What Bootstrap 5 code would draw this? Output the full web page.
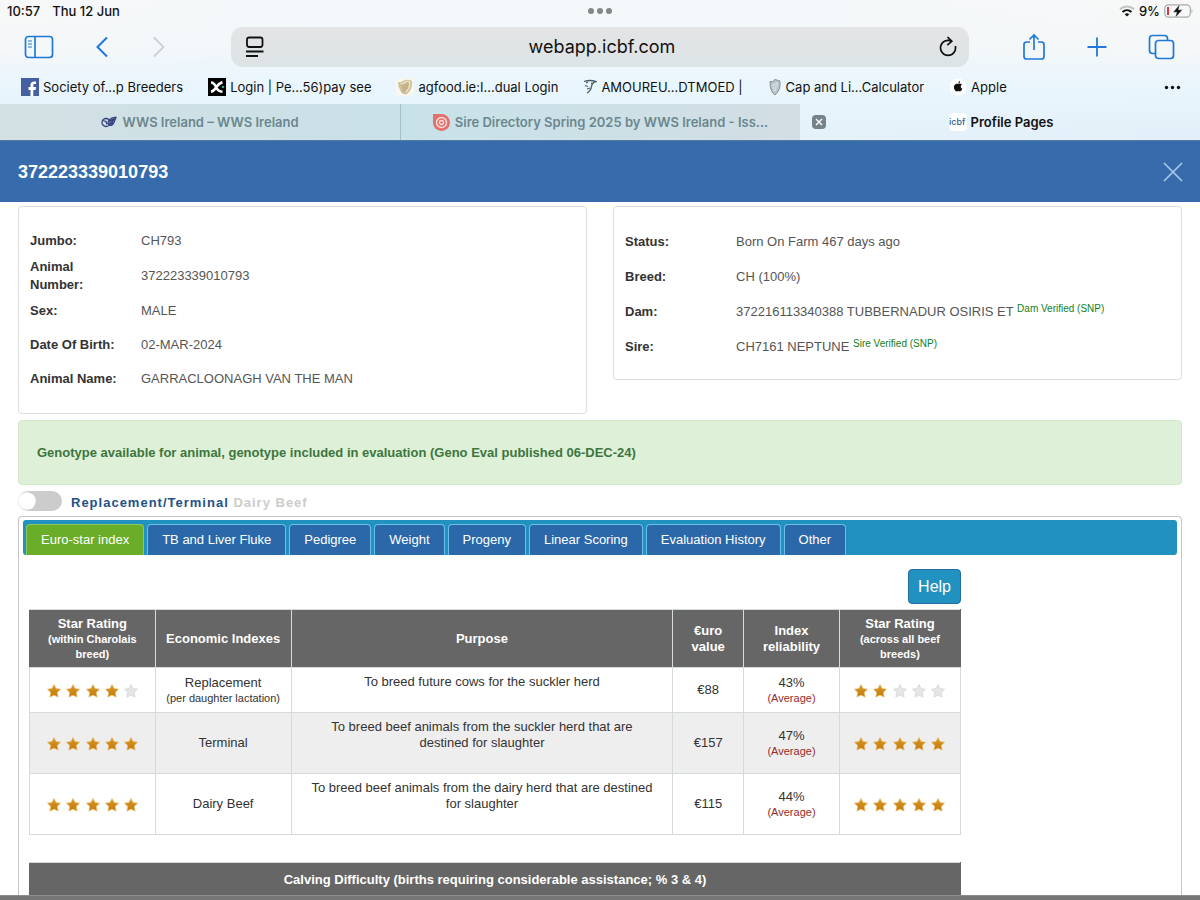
<!DOCTYPE html>
<html lang="en">
<head>
<meta charset="utf-8">
<meta name="viewport" content="width=device-width, initial-scale=1">
<title>Profile Pages</title>
<link href="https://cdn.jsdelivr.net/npm/bootstrap@5.3.0/dist/css/bootstrap.min.css" rel="stylesheet">
<style>
body{font-family:"Liberation Sans",Arial,sans-serif;font-size:13px;line-height:18px;color:#333;background:#fff}
button{font-family:inherit}
.browser{font-family:Inter,"Noto Sans",sans-serif;color:#111;background:linear-gradient(90deg,#f5f5f500 0,#e9f7fe55 25%,#e9f7fe55 60%,#e2eff800 100%),linear-gradient(#f8f8f8 0,#f5f7f8 35%,#e8f5fd 65%,#e2eff8 100%)}
.statusbar{height:23px;padding:0 7px 2px;font-size:13px;font-weight:500;grid-template-columns:1fr auto 1fr}
.toolbar{height:47px;display:grid;grid-template-columns:231fr 738fr 231fr}
.address{height:40px;border-radius:12px;background:linear-gradient(#e3e4e5,#dde4e6);font-size:18px;padding:0 12px 0 14px}
.address input{border:0;background:none;text-align:center;min-width:0;color:#111;outline-offset:4px}
.icon-btn{border:0;background:none;padding:0;color:#1f78d8;line-height:0}
.bookmarks{height:34px;font-size:13px;padding:0 19px 0 21px}
.bookmarks a,.tabstrip a{text-decoration:none;white-space:nowrap}
.bookmarks a,.tabstrip .tab-live a{color:#111}
.bookmarks .set{gap:25px}
.tabstrip{height:36px;display:grid;grid-template-columns:repeat(3,minmax(0,1fr));font-size:13px;font-weight:600}
.tab-idle{background:linear-gradient(90deg,#d3e0e3,#c9e1e8);color:#6b878e;min-width:0}
.tab-idle+.tab-idle{border-left:1px solid #a9bfc6;background:linear-gradient(90deg,#c8e2e9,#d2dee4)}
.tab-close{width:14px;height:14px;background:#748389}
.profile-bar{height:62px;background:#386bac;color:#fff;padding:0 17px 0 18px;border-top:1px solid #537a9f}
.profile-bar h1{font-size:18px;font-weight:700;line-height:24px}
.page-pad{padding:4px 18px 0}
.panels{display:grid;grid-template-columns:1fr 1fr;gap:26px;align-items:start}
.info{border:1px solid #ddd;border-radius:4px;padding:17px 11px}
.info .line{min-height:34px}
.info.status{padding-bottom:15px}
.info.status .line{min-height:35px}
.info dt{width:111px;padding-right:16px;flex:none;font-weight:700;color:#333}
.info dd{color:#555}
.info sup{font-size:10px;color:#12801a;top:-4px;vertical-align:baseline}
.notice{margin-top:6px;padding:22px 18px;border:1px solid #d0e9c6;border-radius:4px;background:#dff0d8;color:#3c763d;font-weight:700;line-height:19px}
.mode{height:31px;gap:9px;letter-spacing:1px;font-weight:700;color:#235187}
.mode .form-check-input{width:44px;height:20px;margin:0;border:0;background-color:#ccc;background-size:18px;--bs-form-switch-bg:url("data:image/svg+xml,%3csvg xmlns='http://www.w3.org/2000/svg' viewBox='-4 -4 8 8'%3e%3ccircle r='3.9' fill='%23fff'/%3e%3c/svg%3e")}
.mode .off{color:#ccc}
.sheet{border:1px solid #c5c5ca;border-bottom:0;border-radius:4px 4px 0 0;padding:3px 4px 0}
.subnav{background:#2191c0;border-radius:3px;padding:4px 3px 0;gap:3px}
.subnav .nav-link{border:1px solid #68c0e8;border-bottom:0;border-radius:4px 4px 0 0;background:#2b68aa;color:#fff;font-size:13px;line-height:18px;padding:6px 14px;white-space:nowrap}
.subnav .nav-link.active{background:#6aad29;border-color:#8cc95a}
.content{max-width:944px;padding:14px 6px 0}
.help{background:#2191c0;border:1px solid #276ba0;border-radius:4px;color:#fff;font-size:16px;line-height:21px;padding:6px 9px}
.grid-table{width:100%;table-layout:fixed;border-collapse:collapse;text-align:center;line-height:16px;margin-top:5px;color:#333}
.grid-table th,.grid-table td{border:1px solid #d5dadd}
.grid-table th{background:#666;color:#fff;padding:6px 6px 5px}
.grid-table th:first-child{border-left-color:#666}
.grid-table th:last-child{border-right-color:#666}
.grid-table td{padding:5px;vertical-align:middle}
.grid-table td.why{vertical-align:top;padding:6px 15px}
.grid-table .fine{font-size:11px;line-height:15px;display:block}
.row-a{height:45px}.row-b{height:61px}
.row-shade td{background:#eee}
.avg{color:#962a2a}
.second{margin-top:27px}
.grid-table.second th{padding:9px 5px}
.edge{height:5px;background:#767676;border-top:1px solid #8d8d8d;flex:none}
.scroller{scrollbar-width:none;min-height:0}
.scroller::-webkit-scrollbar{display:none}
</style>
</head>
<body class="vh-100 d-flex flex-column overflow-hidden">
<svg width="0" height="0" class="position-absolute" aria-hidden="true">
<defs>
<linearGradient id="gold" x1="0" y1="0" x2="0" y2="1"><stop offset="0" stop-color="#d99a28"/><stop offset="1" stop-color="#c57808"/></linearGradient>
<symbol id="star" viewBox="0 0 14 14"><path d="M7 .6l2 4 4.500.6-3.300 3.200.9 4.700L7 11.100l-4.100 2 .9-4.700L.5 5.200 5 4.600z" fill="url(#gold)" stroke="#e9b765" stroke-width=".7" stroke-linejoin="round"/></symbol>
<symbol id="blank" viewBox="0 0 14 14"><path d="M7 .6l2 4 4.500.6-3.300 3.200.9 4.700L7 11.100l-4.100 2 .9-4.700L.5 5.200 5 4.600z" fill="#e6e6e6" stroke="#d6d6d6" stroke-width=".8" stroke-linejoin="round"/></symbol>
<symbol id="five" viewBox="0 0 91 14"><use href="#star" width="14" height="14"/><use href="#star" x="19" width="14" height="14"/><use href="#star" x="39" width="14" height="14"/><use href="#star" x="58" width="14" height="14"/><use href="#star" x="77" width="14" height="14"/></symbol>
<symbol id="four" viewBox="0 0 91 14"><use href="#star" width="14" height="14"/><use href="#star" x="19" width="14" height="14"/><use href="#star" x="39" width="14" height="14"/><use href="#star" x="58" width="14" height="14"/><use href="#blank" x="77" width="14" height="14"/></symbol>
<symbol id="two" viewBox="0 0 91 14"><use href="#star" width="14" height="14"/><use href="#star" x="19" width="14" height="14"/><use href="#blank" x="39" width="14" height="14"/><use href="#blank" x="58" width="14" height="14"/><use href="#blank" x="77" width="14" height="14"/></symbol>
</defs>
</svg>

<header class="browser flex-shrink-0">
  <div class="statusbar d-grid align-items-center">
    <div class="d-flex" style="gap:12px"><span>10:57</span><span>Thu 12 Jun</span></div>
    <svg width="26" height="8" fill="#858585"><circle cx="4" cy="4" r="3"/><circle cx="13" cy="4" r="3"/><circle cx="22" cy="4" r="3"/></svg>
    <div class="d-flex align-items-center justify-content-end gap-1">
      <svg width="16" height="12" viewBox="0 0 16 12" fill="none" stroke-width="2"><path d="M1 4.300C5 .4 11 .4 15 4.300" stroke="#c4c4c4"/><path d="M3.500 7c2.600-2.500 6.400-2.500 9 0" stroke="#111"/><path d="M8 11.500L5.700 9.200c1.300-1.200 3.300-1.200 4.600 0z" fill="#111"/></svg>
      <span>9%</span>
      <svg width="29" height="14" viewBox="0 0 29 14"><rect x=".8" y=".8" width="25.500" height="12.400" rx="3.600" fill="none" stroke="#a9a9a9" stroke-width="1.200"/><path d="M3 3h2v8H3z" fill="#e0353b"/><path d="M27.500 5c1.300.5 1.300 3.500 0 4z" fill="#a9a9a9"/><path d="M15.800.3L9 8.200h3.700L11.200 13.800 18.500 5.800h-4z" fill="#111" stroke="#f8f8f8" stroke-width=".4"/></svg>
    </div>
  </div>
  <div class="toolbar align-items-center">
    <div class="d-flex align-items-center" style="padding-left:24px;gap:42px">
      <button class="icon-btn" aria-label="Sidebar"><svg width="30" height="24" fill="none" stroke="currentColor" stroke-width="1.700"><rect x="1.500" y="1.500" width="27" height="21" rx="3"/><path d="M11 1.500v21"/><path d="M4 6h4M4 9h4M4 12h4" stroke-width="1.200"/></svg></button>
      <button class="icon-btn" aria-label="Back"><svg width="12" height="22" fill="none" stroke="currentColor" stroke-width="2"><path d="M11 1.500L1.500 11 11 20.500"/></svg></button>
      <button class="icon-btn" aria-label="Forward" disabled><svg width="16" height="22" fill="none" stroke="#ccd0d3" stroke-width="1.800"><path d="M4 1.500L13.500 11 4 20.500"/></svg></button>
    </div>
    <div class="address d-flex align-items-center">
      <button class="icon-btn text-dark" aria-label="Page menu"><svg width="20" height="22" fill="none" stroke="#111" stroke-width="1.800"><rect x="2" y="1.500" width="15.500" height="9.500" rx="2.200"/><path d="M1 15.500h17.500M1 20h12"/></svg></button>
      <input class="flex-grow-1" type="text" value="webapp.icbf.com" aria-label="Address">
      <button class="icon-btn" aria-label="Reload"><svg width="18" height="22" fill="none" stroke="#111" stroke-width="1.700"><path d="M16.300 10A7.500 7.500 0 1 1 12.500 5.200M8.500 1l4.300 4.300-4.500 3.800"/></svg></button>
    </div>
    <div class="d-flex align-items-center justify-content-end" style="padding-right:25px;gap:41px">
      <button class="icon-btn" aria-label="Share"><svg width="24" height="28" fill="none" stroke="currentColor" stroke-width="1.700"><path d="M8 9H4.500Q2 9 2 11.500v12Q2 26 4.500 26h15q2.500 0 2.500-2.500v-12Q22 9 19.500 9H16M12 17V2M7.500 6.500L12 2l4.500 4.500"/></svg></button>
      <button class="icon-btn" aria-label="New tab"><svg width="20" height="20" stroke="currentColor" stroke-width="1.800"><path d="M10 .5v19M.5 10h19"/></svg></button>
      <button class="icon-btn" aria-label="Tabs"><svg width="27" height="26" fill="none" stroke="currentColor" stroke-width="1.700"><rect x="7.500" y="6.500" width="18" height="18" rx="3"/><path d="M7 19.500H4.500q-3 0-3-3v-12q0-3 3-3h12q3 0 3 3V6"/></svg></button>
    </div>
  </div>
  <nav class="bookmarks d-flex align-items-center" aria-label="Bookmarks">
    <div class="set d-flex align-items-center">
      <a href="#" class="d-flex align-items-center gap-1"><svg width="18" height="18"><path fill="#4460a0" d="M0 0h18v18H0z"/><path fill="#fff" d="M9.500 18v-6H7.500V9h2V7q0-3.500 3.500-3.500h2v2.600h-1.300q-1.400 0-1.400 1.400V9H15l-.4 3h-2.300v6z"/></svg>Society of...p Breeders</a>
      <a href="#" class="d-flex align-items-center gap-1"><svg width="18" height="18"><path d="M0 0h18v18H0z"/><path d="M3 4.500q3 0 5 4.500t6.500 4.800M14.500 4.200Q11 5 8.500 9T3 13.800" fill="none" stroke="#fff" stroke-width="2.500"/><circle cx="15" cy="9" r="1.300" fill="#28a58a"/></svg>Login | Pe...56)pay see</a>
      <a href="#" class="d-flex align-items-center gap-1"><svg width="18" height="18"><rect width="18" height="18" rx="4" fill="#f9f7ed"/><path d="M2 4q3 1 6-1.500Q12 1 16 3q1 8-5 13-4 1-6-2Q2 9 2 4z" fill="#cbbf98"/><path d="M4.500 5.500Q8 6 10 3.500q3-1 4 1Q14 11 9.500 14" stroke="#ece5cb" stroke-width="1.300" fill="none"/><path d="M6 7l2.500 7M8.500 6l1 7M11 5v6" stroke="#b4a16b" stroke-width=".7" fill="none"/></svg>agfood.ie:I...dual Login</a>
      <a href="#" class="d-flex align-items-center gap-1"><svg width="14" height="18" fill="none" stroke="#4b5c66"><path d="M1 3.500Q7 1.500 13 3.500q-4 1-4.500 5T4 15" stroke-width="1.300"/><path d="M2 7.500l3 1M4 11l3-1M8 5l2 1M3 5l2-1" stroke-width="1.300"/></svg>AMOUREU...DTMOED |</a>
      <a href="#" class="d-flex align-items-center gap-1"><svg width="14" height="18"><path d="M2 3.500q3 1 5-2l5 1.500q1 9-5 14-5-3-5-13.500z" fill="#b9c2c6" stroke="#87949a"/><path d="M4.500 6Q8 6 9.500 4q1 6-3 10Q4 11 4.500 6z" fill="#dce4e8"/><path d="M6 6.500v6M8 6v5" stroke="#98a5ab" stroke-width=".6"/></svg>Cap and Li...Calculator</a>
      <a href="#" class="d-flex align-items-center gap-1"><svg width="18" height="18"><circle cx="9" cy="9" r="8.500" fill="#fff"/><path d="M9.300 6c1-.7 2.700-.6 3.600.6-1.800 1.300-1.400 3.500.4 4.200-1 2.500-2 3-3.900 2.300-1.900.7-3 .3-4.100-2.200-1.300-3.300 1.300-6.200 4-4.900zM9.300 5.500q0-2 1.900-2.800.2 2.100-1.900 2.800" fill="#111"/></svg>Apple</a>
    </div>
    <button class="icon-btn ms-auto" aria-label="More bookmarks"><svg width="17" height="5" fill="#111"><circle cx="2.500" cy="2.500" r="1.700"/><circle cx="8.500" cy="2.500" r="1.700"/><circle cx="14.500" cy="2.500" r="1.700"/></svg></button>
  </nav>
  <div class="tabstrip">
    <a href="#" class="tab-idle d-flex align-items-center justify-content-center gap-1"><svg width="17" height="14" fill="none" stroke="#34417e" stroke-width="1.300"><circle cx="5" cy="7.500" r="4"/><path d="M2 5.500l3 1 1 3M8 5q3-3 7-2.500-1 2-2 5-2 4-4.500 2.500T8 5z"/><path d="M8.500 6l5-2.500-4 5.500 3-1" stroke-width="1.800"/></svg>WWS Ireland – WWS Ireland</a>
    <a href="#" class="tab-idle d-flex align-items-center justify-content-center" style="gap:5px"><svg width="17" height="17" class="flex-shrink-0"><path d="M0 0h8.500A8.500 8.500 0 1 1 0 8.500z" fill="#e2706c"/><circle cx="8.500" cy="8.500" r="5" fill="none" stroke="#f6dcdc" stroke-width="1.500"/><circle cx="8.500" cy="8.500" r="2" fill="none" stroke="#f6dcdc" stroke-width="1.300"/></svg><span class="text-truncate">Sire Directory Spring 2025 by WWS Ireland - Iss...</span></a>
    <div class="tab-live d-flex align-items-center ps-2">
      <button class="icon-btn tab-close rounded-1 ms-1" aria-label="Close tab"><svg width="8" height="8" stroke="#fff" stroke-width="1.400"><path d="M1 1l6 6M7 1L1 7"/></svg></button>
      <a href="#" class="d-flex align-items-center justify-content-center gap-1 flex-grow-1 pe-4"><svg width="18" height="18"><rect width="18" height="18" rx="4" fill="#fff"/><text x="0" y="12" font-size="9" font-weight="500" fill="#355d8e">icbf</text></svg>Profile Pages</a>
    </div>
  </div>
</header>

<div class="profile-bar d-flex align-items-center justify-content-between flex-shrink-0">
  <h1 class="m-0">372223339010793</h1>
  <button class="icon-btn" aria-label="Close profile"><svg width="20" height="20" stroke="#a8c8ec" stroke-width="1.700"><path d="M1 1l18 18M19 1L1 19"/></svg></button>
</div>

<main class="scroller flex-grow-1 overflow-auto page-pad">
  <div class="panels">
    <dl class="info m-0">
      <div class="line d-flex align-items-center"><dt>Jumbo:</dt><dd class="m-0">CH793</dd></div>
      <div class="line d-flex align-items-center"><dt>Animal Number:</dt><dd class="m-0">372223339010793</dd></div>
      <div class="line d-flex align-items-center"><dt>Sex:</dt><dd class="m-0">MALE</dd></div>
      <div class="line d-flex align-items-center"><dt>Date Of Birth:</dt><dd class="m-0">02-MAR-2024</dd></div>
      <div class="line d-flex align-items-center"><dt>Animal Name:</dt><dd class="m-0">GARRACLOONAGH VAN THE MAN</dd></div>
    </dl>
    <dl class="info status m-0">
      <div class="line d-flex align-items-center"><dt>Status:</dt><dd class="m-0">Born On Farm 467 days ago</dd></div>
      <div class="line d-flex align-items-center"><dt>Breed:</dt><dd class="m-0">CH (100%)</dd></div>
      <div class="line d-flex align-items-center"><dt>Dam:</dt><dd class="m-0">372216113340388 TUBBERNADUR OSIRIS ET <sup>Dam Verified (SNP)</sup></dd></div>
      <div class="line d-flex align-items-center"><dt>Sire:</dt><dd class="m-0">CH7161 NEPTUNE <sup>Sire Verified (SNP)</sup></dd></div>
    </dl>
  </div>
  <div class="notice" role="status">Genotype available for animal, genotype included in evaluation (Geno Eval published 06-DEC-24)</div>
  <div class="mode d-flex align-items-center form-switch p-0">
    <input class="form-check-input" type="checkbox" role="switch" id="mode">
    <label for="mode" class="pt-1">Replacement/Terminal <span class="off">Dairy Beef</span></label>
  </div>
  <section class="sheet">
    <nav class="subnav nav flex-nowrap">
      <a class="nav-link active" href="#" aria-current="page">Euro-star index</a>
      <a class="nav-link" href="#">TB and Liver Fluke</a>
      <a class="nav-link" href="#">Pedigree</a>
      <a class="nav-link" href="#">Weight</a>
      <a class="nav-link" href="#">Progeny</a>
      <a class="nav-link" href="#">Linear Scoring</a>
      <a class="nav-link" href="#">Evaluation History</a>
      <a class="nav-link" href="#">Other</a>
    </nav>
    <div class="content">
      <div class="d-flex justify-content-end"><button class="help">Help</button></div>
      <table class="grid-table">
        <colgroup><col style="width:13.5%"><col style="width:14.6%"><col style="width:41%"><col style="width:7.6%"><col style="width:10.3%"><col style="width:13%"></colgroup>
        <thead><tr>
          <th>Star Rating<span class="fine">(within Charolais breed)</span></th><th>Economic Indexes</th><th>Purpose</th><th>€uro value</th><th>Index reliability</th><th>Star Rating<span class="fine">(across all beef breeds)</span></th>
        </tr></thead>
        <tbody>
          <tr class="row-a"><td><svg width="91" height="14" role="img" aria-label="4 of 5 stars"><use href="#four" width="91" height="14"/></svg></td><td>Replacement<span class="fine">(per daughter lactation)</span></td><td class="why">To breed future cows for the suckler herd</td><td>€88</td><td>43%<span class="fine avg">(Average)</span></td><td><svg width="91" height="14" role="img" aria-label="2 of 5 stars"><use href="#two" width="91" height="14"/></svg></td></tr>
          <tr class="row-b row-shade"><td><svg width="91" height="14" role="img" aria-label="5 of 5 stars"><use href="#five" width="91" height="14"/></svg></td><td>Terminal</td><td class="why">To breed beef animals from the suckler herd that are destined for slaughter</td><td>€157</td><td>47%<span class="fine avg">(Average)</span></td><td><svg width="91" height="14" role="img" aria-label="5 of 5 stars"><use href="#five" width="91" height="14"/></svg></td></tr>
          <tr class="row-b"><td><svg width="91" height="14" role="img" aria-label="5 of 5 stars"><use href="#five" width="91" height="14"/></svg></td><td>Dairy Beef</td><td class="why">To breed beef animals from the dairy herd that are destined for slaughter</td><td>€115</td><td>44%<span class="fine avg">(Average)</span></td><td><svg width="91" height="14" role="img" aria-label="5 of 5 stars"><use href="#five" width="91" height="14"/></svg></td></tr>
        </tbody>
      </table>
      <table class="grid-table second"><thead><tr><th>Calving Difficulty (births requiring considerable assistance; % 3 &amp; 4)</th></tr></thead></table>
    </div>
  </section>
</main>
<div class="edge"></div>
<script src="https://cdn.jsdelivr.net/npm/bootstrap@5.3.0/dist/js/bootstrap.bundle.min.js"></script>
</body>
</html>
